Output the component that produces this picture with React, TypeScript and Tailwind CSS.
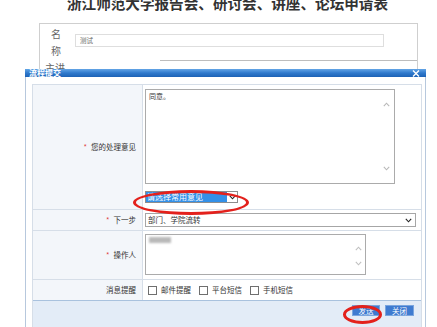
import React from "react";

const Chevron = ({ up = false, className = "" }: { up?: boolean; className?: string }) => (
  <svg width="7" height="5" viewBox="0 0 7 5" className={className}>
    <path
      d={up ? "M0.8 4.2 L3.5 1.2 L6.2 4.2" : "M0.8 0.8 L3.5 3.8 L6.2 0.8"}
      fill="none"
      stroke="currentColor"
      strokeWidth="1.1"
    />
  </svg>
);

const Check = ({ label }: { label: string }) => (
  <div className="flex items-center gap-[4px]">
    <div className="w-[9px] h-[9px] border border-[#6f6f6f] bg-white" />
    <span className="text-[7.5px] leading-none text-[#333]">{label}</span>
  </div>
);

const Label = ({ text, req = true }: { text: string; req?: boolean }) => (
  <div className="flex items-center justify-end pr-[6px] bg-[#f3f6fa] border-r border-[#d6dee8] text-[7.5px] leading-none text-[#333]">
    {req && <span className="text-[#e04040] mr-[4px]">*</span>}
    <span>{text}</span>
  </div>
);

export default function App() {
  return (
    <div className="relative w-[437px] h-[327px] overflow-hidden bg-white font-['Noto_Sans_CJK_SC','Noto_Sans',sans-serif]">
      {/* background page */}
      <div className="relative z-0">
        <div className="mt-[-5px] pl-[18px] text-center text-[14.6px] leading-[15px] font-bold text-[#333]">
          浙江师范大学报告会、研讨会、讲座、论坛申请表
        </div>
        <div className="ml-[39px] mt-[13px] w-[379px] h-[46px] overflow-hidden border-l border-r border-t border-[#cfcfcf]">
          <div className="flex h-[36px]">
            <div className="w-[30px] flex flex-col items-center justify-center pl-[2px] text-[10px] leading-[17px] text-[#666]">
              <span>名</span>
              <span>称</span>
            </div>
            <div className="pt-[10px] pl-[5px]">
              <div className="w-[309px] h-[13px] border border-[#dedede] text-[6.5px] leading-[11px] pl-[4px] text-[#666]">
                测试
              </div>
            </div>
          </div>
          <div className="flex">
            <div className="w-[120px] pl-[5px] pt-[2px] text-[10px] leading-[12px] text-[#666]">主讲</div>
            <div className="flex-1 border-t border-[#bdbdbd]" />
          </div>
        </div>
      </div>

      {/* dialog */}
      <div className="absolute z-10 left-[25px] top-[69px] w-[401px] h-[270px] flex flex-col">
        <div className="h-[13px] flex items-center justify-between pl-[4px] pr-[6px] bg-gradient-to-b from-[#63a5e6] via-[#2f79cc] to-[#1d62b6]">
          <span className="text-white font-bold text-[8px] leading-none">流程提交</span>
          <svg width="8" height="7" viewBox="0 0 8 7">
            <path d="M1 0.5 L7 6.5 M7 0.5 L1 6.5" stroke="white" strokeWidth="1.4" />
          </svg>
        </div>
        <div className="flex-1 border-x border-[#b7c8dd] bg-white pt-[7px] pl-[6px] pr-[4px]">
          <div className="w-[390px] border border-[#d6dee8]">
            {/* row 1 */}
            <div className="grid grid-cols-[110px_1fr] border-b border-[#d6dee8]">
              <Label text="您的处理意见" />
              <div className="pl-[2px] pt-[4px] pb-[6px]">
                <div className="relative w-[250px] h-[95px] border border-[#ababab] bg-white">
                  <span className="absolute left-[3px] top-[3px] text-[7px] leading-none text-[#333]">同意。</span>
                  <Chevron up className="absolute right-[4px] top-[12px] text-[#b8b8b8]" />
                  <Chevron className="absolute right-[4px] bottom-[12px] text-[#b8b8b8]" />
                </div>
                <div className="mt-[7px] w-[93px] h-[12px] border border-[#8d8d8d] flex">
                  <div className="flex-1 bg-[#3390e8] text-white text-[8px] leading-[10px] pl-[1px]">请选择常用意见</div>
                  <div className="w-[10px] flex items-center justify-center bg-white text-[#222]">
                    <Chevron />
                  </div>
                </div>
              </div>
            </div>
            {/* row 2 */}
            <div className="grid grid-cols-[110px_1fr] border-b border-[#d6dee8]">
              <Label text="下一步" />
              <div className="pl-[2px] py-[3px]">
                <div className="w-[271px] h-[14px] border border-[#a6a6a6] flex items-center justify-between pl-[2px] pr-[3px]">
                  <span className="text-[7.5px] leading-none text-[#333]">部门、学院流转</span>
                  <Chevron className="text-[#222]" />
                </div>
              </div>
            </div>
            {/* row 3 */}
            <div className="grid grid-cols-[110px_1fr] border-b border-[#d6dee8]">
              <Label text="操作人" />
              <div className="pl-[2px] pt-[3px] pb-[4px]">
                <div className="relative w-[221px] h-[41px] border border-[#ababab]">
                  <div className="absolute left-[3px] top-[2px] w-[22px] h-[6px] bg-[#b9b9b9] blur-[1px]" />
                  <Chevron up className="absolute right-[3px] top-[11px] text-[#c0c0c0]" />
                  <Chevron className="absolute right-[3px] top-[26px] text-[#c0c0c0]" />
                </div>
              </div>
            </div>
            {/* row 4 */}
            <div className="grid grid-cols-[110px_1fr] h-[21px] border-b border-[#a9c2de]">
              <Label text="消息提醒" req={false} />
              <div className="flex items-center gap-[8px] pl-[5px]">
                <Check label="邮件提醒" />
                <Check label="平台短信" />
                <Check label="手机短信" />
              </div>
            </div>
            {/* footer */}
            <div className="h-[40px] bg-[#e3ecf7] flex justify-end items-start pt-[4px] pr-[7px] gap-[5px]">
              <button className="w-[28px] h-[11px] bg-[#3f7bd0] border border-[#7aa5de] text-white text-[7.5px] leading-none">发送</button>
              <button className="w-[29px] h-[11px] bg-[#3f7bd0] border border-[#7aa5de] text-white text-[7.5px] leading-none">关闭</button>
            </div>
          </div>
        </div>
      </div>

      {/* red annotation ellipses */}
      <div className="absolute z-20 left-[133px] top-[190px] w-[116px] h-[25px] rounded-[50%] border-[3px] border-[#e3211c]" />
      <div className="absolute z-20 left-[343px] top-[305px] w-[39px] h-[19px] rounded-[50%] border-[3px] border-[#e3211c]" />
    </div>
  );
}
